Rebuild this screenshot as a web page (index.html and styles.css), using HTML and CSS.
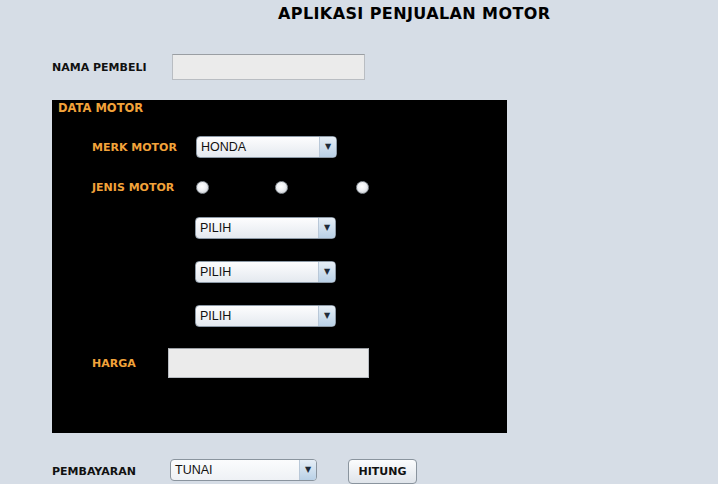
FILE: index.html
```html
<!DOCTYPE html>
<html>
<head>
<meta charset="utf-8">
<link rel="stylesheet" href="styles.css">
</head>
<body>
<h1 class="title">APLIKASI PENJUALAN MOTOR</h1>
<div class="buyer-row">
  <span class="label dark w-buyer">NAMA PEMBELI</span>
  <div class="field buyer-field"></div>
</div>
<section class="panel">
  <div class="panel-title">DATA MOTOR</div>
  <div class="row merk-row">
    <span class="label orange w-merk">MERK MOTOR</span>
    <div class="combo w140"><span class="combo-text">HONDA</span><span class="combo-arrow">&#9660;</span></div>
  </div>
  <div class="row jenis-row">
    <span class="label orange w-merk">JENIS MOTOR</span>
    <div class="radios">
      <span class="radio"></span>
      <span class="radio r2"></span>
      <span class="radio r3"></span>
    </div>
  </div>
  <div class="combo-stack">
    <div class="combo w140"><span class="combo-text">PILIH</span><span class="combo-arrow">&#9660;</span></div>
    <div class="combo w140"><span class="combo-text">PILIH</span><span class="combo-arrow">&#9660;</span></div>
    <div class="combo w140"><span class="combo-text">PILIH</span><span class="combo-arrow">&#9660;</span></div>
  </div>
  <div class="row harga-row">
    <span class="label orange w-harga">HARGA</span>
    <div class="field harga-field"></div>
  </div>
</section>
<div class="bottom-row">
  <span class="label dark w-bayar">PEMBAYARAN</span>
  <div class="combo light w146"><span class="combo-text">TUNAI</span><span class="combo-arrow">&#9660;</span></div>
  <button class="btn">HITUNG</button>
</div>
</body>
</html>
```
FILE: styles.css
```css
html, body {
  margin: 0;
  padding: 0;
}
body {
  width: 718px;
  height: 484px;
  overflow: hidden;
  background: #d6dde6;
  font-family: "DejaVu Sans", Verdana, sans-serif;
}
.title {
  margin: 0;
  padding: 3px 0 0 278px;
  height: 23px;
  line-height: 22px;
  font-size: 16px;
  font-weight: bold;
  color: #000;
  letter-spacing: 0.4px;
}
.label {
  font-size: 11px;
  font-weight: bold;
  white-space: nowrap;
}
.dark { color: #111; }
.orange { color: #f2a33a; }
.buyer-row {
  display: flex;
  align-items: center;
  margin-top: 28px;
  padding-left: 52px;
  height: 26px;
}
.w-buyer { width: 120px; }
.field {
  box-sizing: border-box;
  background: #ebebeb;
  border: 1px solid #b9bdc2;
  border-top-color: #9a9ea3;
}
.buyer-field { width: 193px; height: 26px; }
.panel {
  box-sizing: border-box;
  margin: 20px 0 0 52px;
  width: 455px;
  height: 333px;
  background: #000;
  padding: 0 0 0 40px;
  display: flex;
  flex-direction: column;
}
.panel-title {
  margin-left: -34px;
  height: 16px;
  line-height: 17px;
  font-size: 11.5px;
  font-weight: bold;
  color: #f2a33a;
}
.row {
  display: flex;
  align-items: center;
}
.merk-row { margin-top: 20px; height: 22px; }
.jenis-row { margin-top: 18px; height: 22px; }
.w-merk { width: 104px; }
.combo {
  box-sizing: border-box;
  height: 22px;
  display: flex;
  align-items: stretch;
  border: 1px solid #8c99a6;
  border-radius: 4px;
  background: linear-gradient(#fdfdfe, #e4e9ef);
  overflow: hidden;
}
.w140 { width: 141px; }
.w146 { width: 147px; }
.combo-text {
  flex: 1;
  padding-left: 4px;
  font-family: "Liberation Sans", Arial, sans-serif;
  font-size: 12.5px;
  line-height: 20px;
  color: #111;
}
.combo-arrow {
  width: 16px;
  border-left: 1px solid #b9c8d8;
  background: linear-gradient(#e6eef6, #b9d0e6);
  color: #1e2b38;
  font-size: 8px;
  line-height: 20px;
  text-align: center;
}
.combo.light {
  border-color: #8a949e;
  background: linear-gradient(#fbfcfd, #eef1f5);
}
.radios {
  display: flex;
  align-items: center;
}
.radio {
  width: 13px;
  height: 13px;
  border-radius: 50%;
  background: radial-gradient(circle at 45% 40%, #ffffff 0%, #eef0f3 45%, #bfc4ca 100%);
  border: 1px solid #8e959c;
  box-sizing: border-box;
}
.r2 { margin-left: 66px; }
.r3 { margin-left: 68px; }
.combo-stack {
  margin-top: 19px;
  padding-left: 103px;
  display: flex;
  flex-direction: column;
  gap: 22px;
}
.harga-row { margin-top: 21px; height: 30px; }
.w-harga { width: 76px; }
.harga-field { width: 201px; height: 30px; }
.bottom-row {
  display: flex;
  align-items: flex-start;
  margin-top: 26px;
  padding-left: 52px;
}
.bottom-row .label { line-height: 26px; }
.w-bayar { width: 118px; }
.btn {
  box-sizing: border-box;
  margin-left: 31px;
  width: 69px;
  height: 25px;
  border: 1px solid #8a949e;
  border-radius: 4px;
  background: linear-gradient(#fbfcfd, #dfe4ea);
  font-family: "DejaVu Sans", Verdana, sans-serif;
  font-size: 11px;
  font-weight: bold;
  color: #111;
  padding: 0;
}
```
